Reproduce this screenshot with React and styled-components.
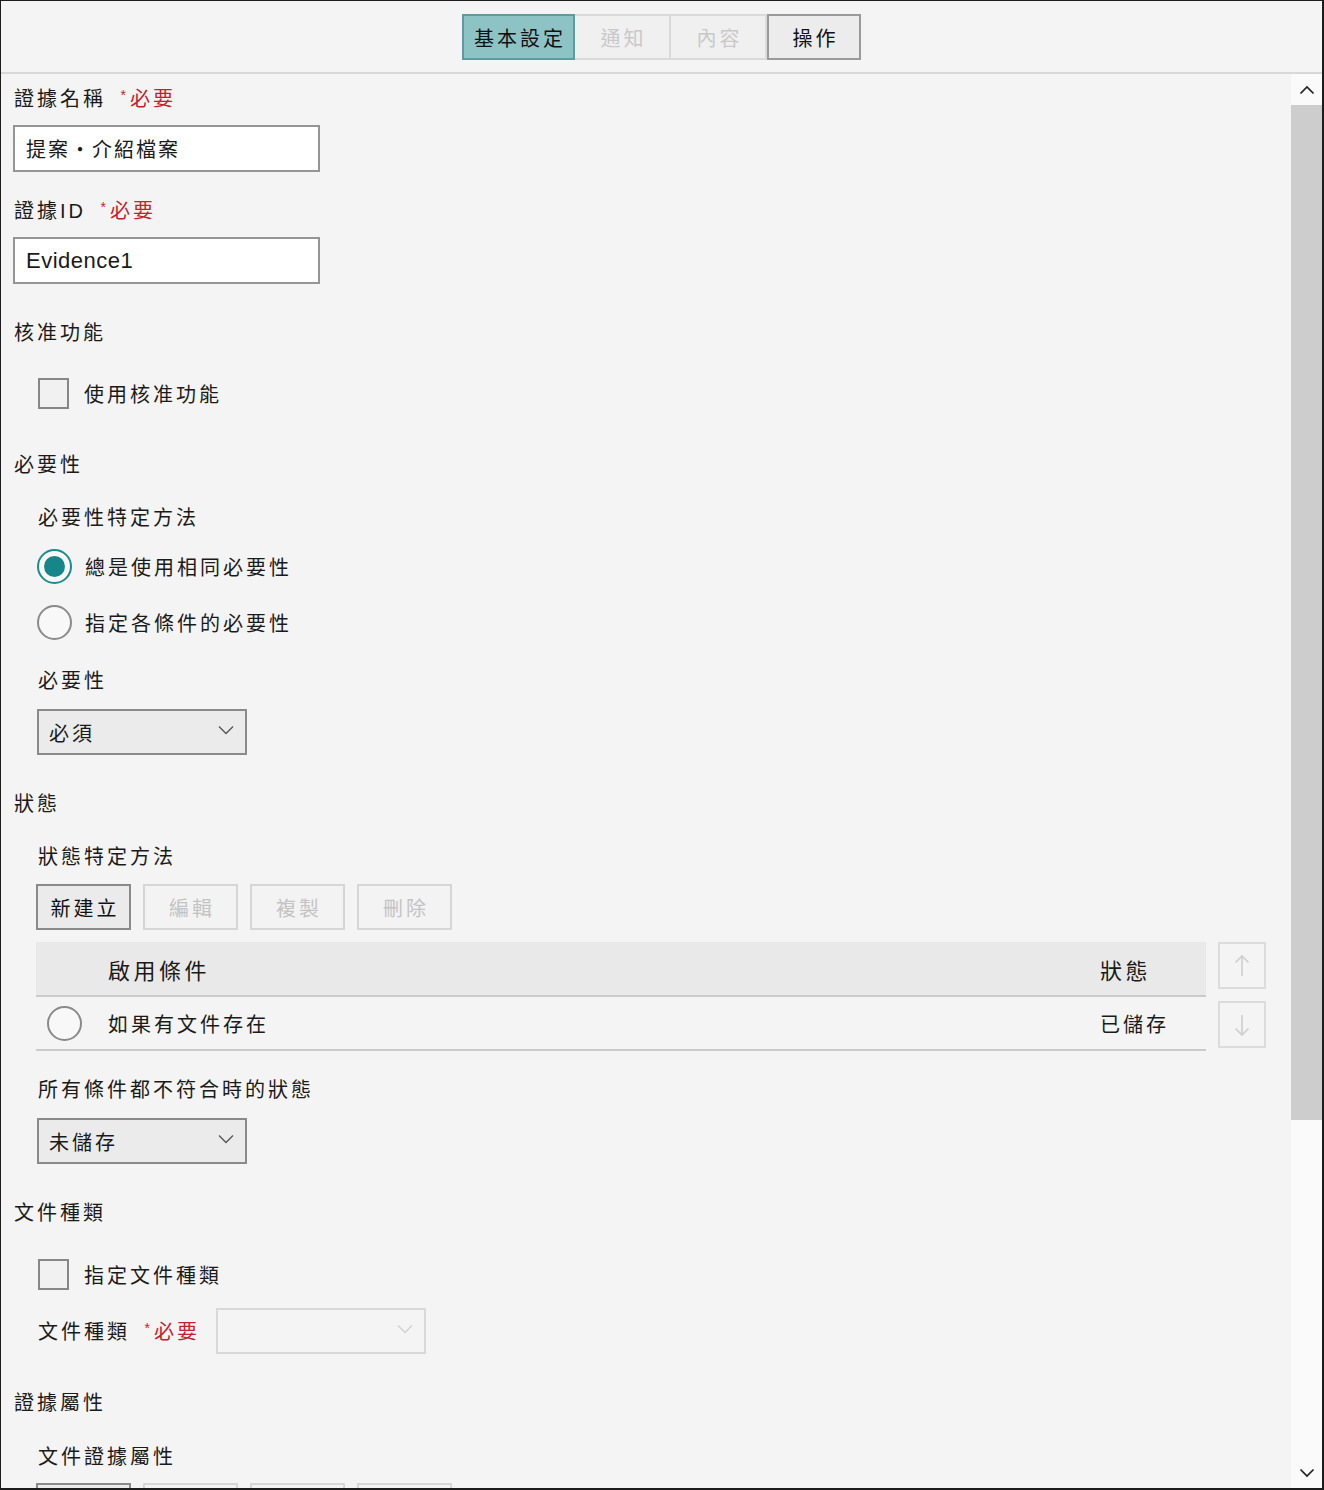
import React from "react";
import styled, { createGlobalStyle } from "styled-components";

const GlobalStyle = createGlobalStyle`
  html, body {
    margin: 0;
    padding: 0;
    background: #f4f4f4;
  }
  * {
    box-sizing: border-box;
  }
`;

const FONT = `"Liberation Sans", "Noto Sans CJK TC", sans-serif`;

const Chevron = ({ color = "#555", size = 16 }) => (
  <svg width={size} height={size / 2 + 2} viewBox="0 0 16 10" fill="none">
    <path d="M1 1.5 L8 8.5 L15 1.5" stroke={color} strokeWidth="1.3" />
  </svg>
);

const Arrow = ({ up }) => (
  <svg width="16" height="24" viewBox="0 0 16 24" fill="none">
    {up ? (
      <path d="M8 22 V2 M1.5 8.5 L8 2 L14.5 8.5" stroke="#cfcfcf" strokeWidth="1.6" />
    ) : (
      <path d="M8 2 V22 M1.5 15.5 L8 22 L14.5 15.5" stroke="#cfcfcf" strokeWidth="1.6" />
    )}
  </svg>
);

const ScrollChevron = ({ up }) => (
  <svg width="16" height="10" viewBox="0 0 16 10" fill="none">
    <path
      d={up ? "M1.5 8.5 L8 2 L14.5 8.5" : "M1.5 1.5 L8 8 L14.5 1.5"}
      stroke="#222"
      strokeWidth="1.7"
    />
  </svg>
);

const Required = () => (
  <Req>
    <Star>*</Star>必要
  </Req>
);

const Select = ({ value, disabled }) => (
  <SelectBox disabled={disabled}>
    <span>{value}</span>
    <Chevron color={disabled ? "#d0d0d0" : "#555"} />
  </SelectBox>
);

const Radio = ({ checked }) => (
  <RadioCircle $checked={checked}>{checked && <RadioDot />}</RadioCircle>
);

const ToolButtons = () => (
  <ButtonRow>
    <ToolButton>新建立</ToolButton>
    <ToolButton disabled>編輯</ToolButton>
    <ToolButton disabled>複製</ToolButton>
    <ToolButton disabled>刪除</ToolButton>
  </ButtonRow>
);

const App = () => {
  return (
    <>
      <GlobalStyle />
      <Frame>
        <Header>
          <Tabs>
            <Tab $variant="active">基本設定</Tab>
            <Tab $variant="disabled">通知</Tab>
            <Tab $variant="disabled">內容</Tab>
            <Tab $variant="normal">操作</Tab>
          </Tabs>
        </Header>
        <Body>
          <Content>
            <Label $gap={10}>
              證據名稱 <Required />
            </Label>
            <TextInput>提案・介紹檔案</TextInput>

            <Label $gap={24}>
              證據ID <Required />
            </Label>
            <TextInput $latin>Evidence1</TextInput>

            <Label $gap={34}>核准功能</Label>
            <CheckRow $gap={30}>
              <Checkbox />
              <OptionText>使用核准功能</OptionText>
            </CheckRow>

            <Label $gap={42}>必要性</Label>
            <SubLabel $gap={23}>必要性特定方法</SubLabel>
            <RadioRow $gap={15}>
              <Radio checked />
              <OptionText>總是使用相同必要性</OptionText>
            </RadioRow>
            <RadioRow $gap={20}>
              <Radio />
              <OptionText>指定各條件的必要性</OptionText>
            </RadioRow>
            <SubLabel $gap={26}>必要性</SubLabel>
            <Indent $gap={13}>
              <Select value="必須" />
            </Indent>

            <Label $gap={34}>狀態</Label>
            <SubLabel $gap={23}>狀態特定方法</SubLabel>
            <Indent $gap={12}>
              <ToolButtons />
            </Indent>

            <TableArea>
              <Table>
                <HeadRow>
                  <span />
                  <HeadCell>啟用條件</HeadCell>
                  <HeadCell>狀態</HeadCell>
                </HeadRow>
                <DataRow>
                  <RadioCell>
                    <Radio />
                  </RadioCell>
                  <Cell>如果有文件存在</Cell>
                  <Cell>已儲存</Cell>
                </DataRow>
              </Table>
              <MoveButtons>
                <MoveButton>
                  <Arrow up />
                </MoveButton>
                <MoveButton>
                  <Arrow />
                </MoveButton>
              </MoveButtons>
            </TableArea>

            <SubLabel $gap={24}>所有條件都不符合時的狀態</SubLabel>
            <Indent $gap={13}>
              <Select value="未儲存" />
            </Indent>

            <Label $gap={34}>文件種類</Label>
            <CheckRow $gap={31}>
              <Checkbox />
              <OptionText>指定文件種類</OptionText>
            </CheckRow>
            <InlineField>
              <span>
                文件種類 <Required />
              </span>
              <Select value="" disabled />
            </InlineField>

            <Label $gap={34}>證據屬性</Label>
            <SubLabel $gap={24}>文件證據屬性</SubLabel>
            <Indent $gap={11}>
              <ToolButtons />
            </Indent>
          </Content>
          <ScrollBar>
            <ScrollArrow>
              <ScrollChevron up />
            </ScrollArrow>
            <ScrollTrack>
              <ScrollThumb />
            </ScrollTrack>
            <ScrollArrow>
              <ScrollChevron />
            </ScrollArrow>
          </ScrollBar>
        </Body>
      </Frame>
    </>
  );
};

const Frame = styled.div`
  width: 1324px;
  height: 1490px;
  border: 2px solid #1c1c1c;
  border-top-width: 1px;
  border-left-width: 1px;
  background: #f4f4f4;
  display: flex;
  flex-direction: column;
  overflow: hidden;
  font-family: ${FONT};
  color: #1a1a1a;
`;

const Header = styled.div`
  height: 73px;
  flex: none;
  display: flex;
  align-items: center;
  justify-content: center;
  border-bottom: 2px solid #d8d8d8;
  padding-top: 1px;
`;

const Tabs = styled.div`
  display: flex;
`;

const tabStyles = {
  active: `background: #8ec3c5; border: 2px solid #5e9b9d; color: #111;`,
  disabled: `background: #f0f0f0; border: 2px solid #dadada; border-left-width: 0; color: #c9c9c9;`,
  normal: `background: #ececec; border: 2px solid #9a9a9a; color: #111;`,
};

const Tab = styled.div`
  height: 46px;
  width: ${(p) => (p.$variant === "active" ? 113 : p.$variant === "normal" ? 94 : 96)}px;
  display: flex;
  align-items: center;
  justify-content: center;
  font-size: 20px;
  letter-spacing: 3px;
  padding-left: 3px;
  ${(p) => tabStyles[p.$variant]}
`;

const Body = styled.div`
  flex: 1;
  display: flex;
  min-height: 0;
`;

const Content = styled.div`
  flex: 1;
  overflow: hidden;
  padding: 0 25px 0 13px;
  display: flex;
  flex-direction: column;

  & > * {
    flex-shrink: 0;
  }
`;

const Label = styled.div`
  height: 30px;
  line-height: 30px;
  font-size: 20px;
  letter-spacing: 3px;
  margin-top: ${(p) => p.$gap || 0}px;
  white-space: nowrap;
`;

const SubLabel = styled(Label)`
  padding-left: 24px;
`;

const Req = styled.span`
  color: #c5202e;
  margin-left: 6px;
`;

const Star = styled.span`
  font-size: 14px;
  line-height: 0;
  vertical-align: 6px;
  margin-right: 1px;
`;

const TextInput = styled.div`
  margin-top: 11px;
  margin-left: -1px;
  width: 307px;
  height: 47px;
  background: #fff;
  border: 2px solid #959595;
  display: flex;
  align-items: center;
  padding-left: 11px;
  font-size: ${(p) => (p.$latin ? 22 : 20)}px;
  letter-spacing: ${(p) => (p.$latin ? 0.5 : 2)}px;
  white-space: nowrap;
`;

const OptionText = styled.span`
  font-size: 20px;
  letter-spacing: 3px;
  white-space: nowrap;
`;

const CheckRow = styled.div`
  display: flex;
  align-items: center;
  gap: 15px;
  height: 30px;
  padding-left: 24px;
  margin-top: ${(p) => p.$gap || 0}px;
`;

const Checkbox = styled.div`
  width: 31px;
  height: 31px;
  border: 2px solid #878787;
  background: #f1f1f1;
  flex: none;
`;

const RadioRow = styled.div`
  display: flex;
  align-items: center;
  gap: 13px;
  height: 36px;
  padding-left: 23px;
  margin-top: ${(p) => p.$gap || 0}px;
`;

const RadioCircle = styled.div`
  width: 35px;
  height: 35px;
  border-radius: 50%;
  border: 2px solid ${(p) => (p.$checked ? "#1a8c90" : "#8a8a8a")};
  background: #f8f8f8;
  display: flex;
  align-items: center;
  justify-content: center;
  flex: none;
`;

const RadioDot = styled.div`
  width: 21px;
  height: 21px;
  border-radius: 50%;
  background: #16868a;
`;

const Indent = styled.div`
  padding-left: 23px;
  margin-top: ${(p) => p.$gap || 0}px;
  display: flex;
`;

const SelectBox = styled.div`
  width: 210px;
  height: 46px;
  border: 2px solid ${(p) => (p.disabled ? "#d9d9d9" : "#8a8a8a")};
  background: ${(p) => (p.disabled ? "#f4f4f4" : "#ebebeb")};
  display: flex;
  align-items: center;
  justify-content: space-between;
  padding: 0 11px 4px 10px;
  font-size: 20px;
  letter-spacing: 3px;

  span {
    padding-top: 5px;
  }
`;

const ButtonRow = styled.div`
  display: flex;
  gap: 12px;
  margin-left: -1px;
`;

const ToolButton = styled.div`
  width: 95px;
  height: 46px;
  display: flex;
  align-items: center;
  justify-content: center;
  font-size: 20px;
  letter-spacing: 3px;
  padding-left: 3px;
  border: 2px solid ${(p) => (p.disabled ? "#d6d6d6" : "#8a8a8a")};
  background: ${(p) => (p.disabled ? "#f3f3f3" : "#ebebeb")};
  color: ${(p) => (p.disabled ? "#c3c3c3" : "#111")};
`;

const TableArea = styled.div`
  display: flex;
  gap: 12px;
  margin-top: 12px;
  padding-left: 22px;
`;

const Table = styled.div`
  flex: 1;
  display: flex;
  flex-direction: column;
`;

const rowGrid = `
  display: grid;
  grid-template-columns: 72px 1fr 106px;
  align-items: center;
`;

const HeadRow = styled.div`
  ${rowGrid}
  height: 55px;
  background: #e9e9e9;
  border-bottom: 2px solid #cbcbcb;
`;

const HeadCell = styled.div`
  font-size: 22px;
  letter-spacing: 3.5px;
  white-space: nowrap;
`;

const DataRow = styled.div`
  ${rowGrid}
  height: 54px;
  border-bottom: 2px solid #cbcbcb;
`;

const RadioCell = styled.div`
  padding-left: 11px;
  display: flex;
`;

const Cell = styled.div`
  font-size: 20px;
  letter-spacing: 3px;
  white-space: nowrap;
`;

const MoveButtons = styled.div`
  display: flex;
  flex-direction: column;
  gap: 12px;
`;

const MoveButton = styled.div`
  width: 48px;
  height: 47px;
  border: 2px solid #dcdcdc;
  background: #f4f4f4;
  display: flex;
  align-items: center;
  justify-content: center;
`;

const InlineField = styled.div`
  display: flex;
  align-items: center;
  gap: 16px;
  height: 47px;
  margin-top: 18px;
  padding-left: 24px;
  font-size: 20px;
  letter-spacing: 3px;
  white-space: nowrap;
`;

const ScrollBar = styled.div`
  width: 31px;
  flex: none;
  display: flex;
  flex-direction: column;
  background: #fafafa;
`;

const ScrollArrow = styled.div`
  height: 31px;
  flex: none;
  display: flex;
  align-items: center;
  justify-content: center;
`;

const ScrollTrack = styled.div`
  flex: 1;
`;

const ScrollThumb = styled.div`
  height: 1015px;
  background: #cdcdcd;
`;

export default App;
